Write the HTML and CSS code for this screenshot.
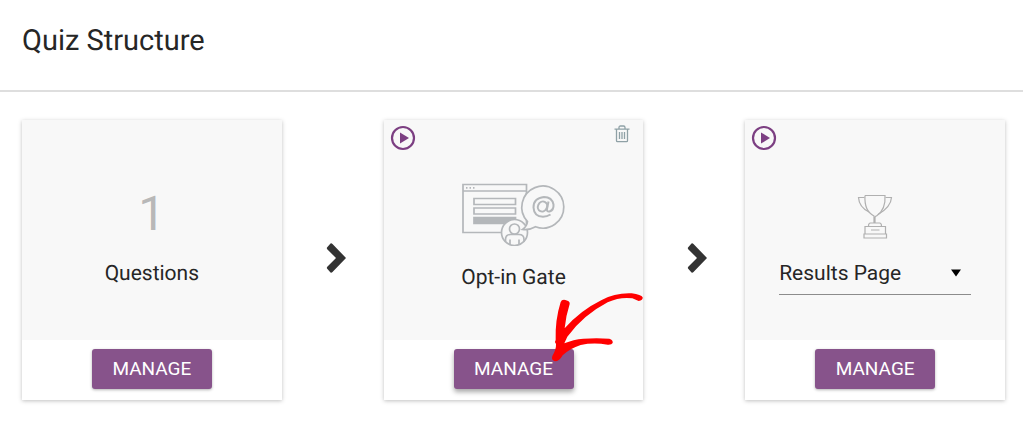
FILE: index.html
```html
<!DOCTYPE html>
<html lang="en">
<head>
    <meta charset="UTF-8">
    <meta name="viewport" content="width=device-width, initial-scale=1.0">
    <title>Quiz Structure</title>
    <link rel="stylesheet" href="styles.css">
</head>
<body>
    <header class="page-header">
        <h1>Quiz Structure</h1>
    </header>
    <main class="structure">
        <section class="card">
            <div class="card-body">
                <div class="count">1</div>
                <h2>Questions</h2>
            </div>
            <div class="card-footer">
                <button type="button" class="manage">MANAGE</button>
            </div>
        </section>

        <div class="step">
            <svg width="24" height="32" viewBox="0 0 24 32" aria-hidden="true">
                <path d="M2 5.5 5.5 1.5Q6.5 1 7.5 2L21 16 7.5 30Q6.5 31 5.5 30.5L2 26.5Q1.5 25.5 2.5 24.5L11 16 2.5 7.5Q1.5 6.5 2 5.5Z" fill="#333"/>
            </svg>
        </div>

        <section class="card">
            <button type="button" class="icon-button play" aria-label="Watch video">
                <svg width="26" height="26" viewBox="0 0 26 26">
                    <circle cx="13" cy="13" r="11" fill="none" stroke="#7c3f82" stroke-width="2.2"/>
                    <path d="M10 7.5v11l9-5.5z" fill="#7c3f82"/>
                </svg>
            </button>
            <button type="button" class="icon-button trash" aria-label="Delete">
                <svg width="16" height="18" viewBox="0 0 16 18" fill="none" stroke="#8fa1a6" stroke-width="1.3">
                    <path d="M0.5 4.2h15M5 4V2.5Q5 1 6.500 1h3Q11 1 11 2.5V4M2.5 4.5v11.2q0 1 1 1h9q1 0 1-1V4.5M5.5 7v7M8 7v7M10.5 7v7"/>
                </svg>
            </button>
            <div class="card-body">
                <svg class="picture" width="104" height="64" viewBox="0 0 104 64" fill="none" stroke="#b4b7ba" stroke-width="1.7" aria-hidden="true">
                    <path d="M1 2.5h63.5v48H1zM1 9h63.5"/>
                    <path d="M4 5.8h1.5M7.5 5.8H9M11 5.8h1.5"/>
                    <path d="M12 16.5h41.5v6H12zM12 26h41.5v6H12z"/>
                    <path d="M12 35.5h41.500v6H12z" fill="#b4b7ba"/>
                    <circle cx="52.5" cy="50.500" r="13" fill="#f8f8f8"/>
                    <circle cx="52.500" cy="47" r="5"/>
                    <path d="M43.500 60v-2.500q0-5 5-5h8.500q5 0 5 5V60M48 57.500v5.500M57 57.500v5.500"/>
                    <path d="M65.500 39.500A21 21 0 1 1 73.500 44.800Q67 48.500 60.500 47.500Q65 44.500 65.500 39.500Z" fill="#f8f8f8"/>
                    <g stroke-width="2">
                        <ellipse cx="80.500" cy="24.500" rx="4.500" ry="5.200" transform="rotate(25 80.5 24.5)"/>
                        <path d="M86.500 19.500 85 27Q84.500 30 87.500 29.500Q92 28 91.500 22.500Q90 15 82 15Q71.500 16 71.500 25.500Q72 34.500 81 34.800Q85 34.800 88.500 32.500"/>
                    </g>
                </svg>
                <h2>Opt-in Gate</h2>
            </div>
            <div class="card-footer">
                <button type="button" class="manage raised">MANAGE</button>
            </div>
            <!-- hand-drawn pointer to the manage button -->
            <svg class="pointer" width="95" height="71" viewBox="330 36 285 213" aria-hidden="true">
                <path d="M362 66Q365 58 376 60Q391 63 389 72Q378 106 374 145Q420 92 485 60Q525 38 575 40Q604 44 608 52Q609 62 596 63L577 55Q540 50 503 67Q430 105 382 170L373 190Q400 178 430 176Q470 173 508 176Q520 180 518 189Q515 195 503 194Q460 187 422 195Q390 205 368 226Q358 244 345 244Q333 241 337 228Q349 208 348 192Q342 186 347 180Q345 120 362 66Z" fill="#f00"/>
            </svg>
        </section>

        <div class="step">
            <svg width="24" height="32" viewBox="0 0 24 32" aria-hidden="true">
                <path d="M2 5.5 5.5 1.5Q6.5 1 7.5 2L21 16 7.5 30Q6.5 31 5.5 30.5L2 26.5Q1.5 25.5 2.5 24.5L11 16 2.5 7.5Q1.5 6.5 2 5.5Z" fill="#333"/>
            </svg>
        </div>

        <section class="card">
            <button type="button" class="icon-button play" aria-label="Watch video">
                <svg width="26" height="26" viewBox="0 0 26 26">
                    <circle cx="13" cy="13" r="11" fill="none" stroke="#7c3f82" stroke-width="2.2"/>
                    <path d="M10 7.5v11l9-5.5z" fill="#7c3f82"/>
                </svg>
            </button>
            <div class="card-body">
                <svg class="picture trophy" width="36" height="46" viewBox="0 0 36 46" fill="none" stroke="#b0b0b0" stroke-width="1.2" aria-hidden="true">
                    <path d="M8 1.5h20q1 14-8.5 20.5H19q-1 .5-1 2v5M8 1.5Q7 17 17 22v7"/>
                    <path d="M7.5 3.5h-6Q2 13 12 18M28.5 3.5h6Q34 13 21 20.5"/>
                    <path d="M11.5 32q0-3 2-3h9q2 0 2 3M8 32.5h20.5V40H8zM7 40h22.5v4H7zM14 36h8.5"/>
                </svg>
                <div class="select-box">
                    <select class="page-select" aria-label="Results type">
                        <option>Results Page</option>
                    </select>
                    <svg class="caret" width="10" height="8" viewBox="0 0 10 8" aria-hidden="true">
                        <path d="M0 0.5h10L5 7.5z" fill="#000"/>
                    </svg>
                </div>
            </div>
            <div class="card-footer">
                <button type="button" class="manage">MANAGE</button>
            </div>
        </section>
    </main>
</body>
</html>
```
FILE: styles.css
```css
* {
    box-sizing: border-box;
}
body {
    margin: 0;
    background: #fff;
    color: #262626;
    font-family: Roboto, "Liberation Sans", sans-serif;
    text-rendering: geometricPrecision;
}
.page-header {
    padding: 22px;
    height: 92px;
    border-bottom: 2px solid #dedede;
}
h1 {
    margin: 0;
    font-size: 29px;
    line-height: 38px;
    font-weight: 400;
}
.structure {
    display: flex;
    padding: 28px 18px 36px 22px;
}
.card {
    position: relative;
    flex: 1;
    min-width: 0;
    background: #fff;
    box-shadow: 0 1px 4px rgba(0, 0, 0, 0.25);
}
.card-body {
    display: flex;
    flex-direction: column;
    align-items: center;
    justify-content: center;
    height: 220px;
    padding-top: 14px;
    background: #f8f8f8;
}
.count {
    color: #b8b8b8;
    font-size: 48px;
    line-height: 56px;
}
h2 {
    margin: 18px 0 0;
    font-size: 21px;
    line-height: 28px;
    font-weight: 400;
}
.picture {
    display: block;
}
.trophy {
    margin-top: 14px;
}
.card-footer {
    display: flex;
    justify-content: center;
    align-items: center;
    height: 60px;
    padding-bottom: 2px;
}
.manage {
    width: 120px;
    height: 40px;
    padding: 0;
    border: 0;
    border-radius: 3px;
    background: #87538b;
    color: #fff;
    font: 400 19px/40px Roboto, "Liberation Sans", sans-serif;
    box-shadow: 0 1px 3px rgba(0, 0, 0, 0.3);
    cursor: pointer;
}
.manage.raised {
    box-shadow: 0 3px 5px rgba(0, 0, 0, 0.35);
}
.step {
    display: flex;
    flex: 0 0 102px;
    align-items: center;
    justify-content: center;
    padding: 0 0 4px 8px;
}
.icon-button {
    position: absolute;
    padding: 0;
    border: 0;
    background: none;
    line-height: 0;
    cursor: pointer;
}
.play {
    top: 5px;
    left: 6px;
}
.trash {
    top: 5px;
    right: 13px;
}
.pointer {
    position: absolute;
    top: 172px;
    left: 166px;
    pointer-events: none;
}
.select-box {
    display: grid;
    align-items: center;
    width: 192px;
    margin-top: 12px;
    border-bottom: 1px solid #8c8c8c;
}
.page-select,
.caret {
    grid-area: 1 / 1;
}
.page-select {
    appearance: none;
    width: 100%;
    height: 42px;
    padding: 0;
    border: 0;
    background: none;
    color: #262626;
    font: 400 21px/28px Roboto, "Liberation Sans", sans-serif;
}
.caret {
    justify-self: end;
    margin-right: 10px;
    pointer-events: none;
}
```
